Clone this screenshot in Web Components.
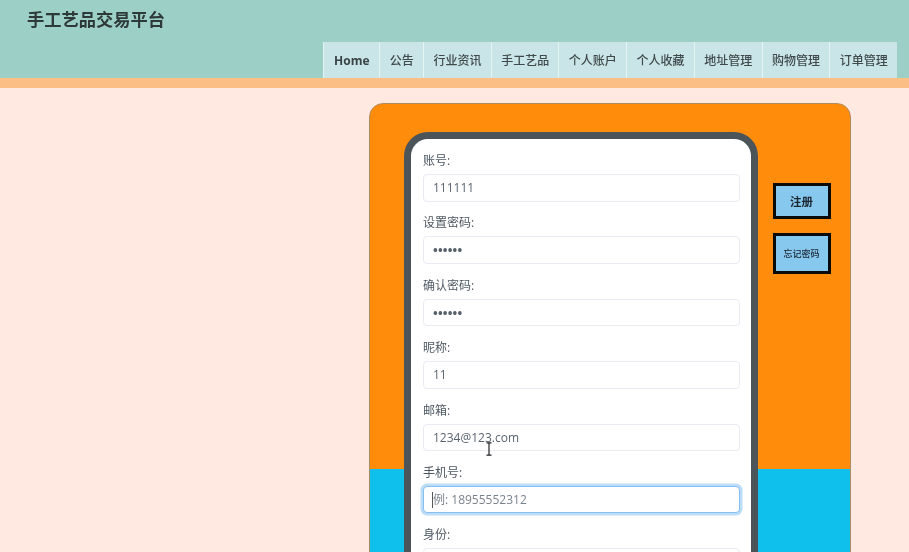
<!DOCTYPE html>
<html lang="zh"><head><meta charset="utf-8"><title>手工艺品交易平台</title>
<style>
html,body{margin:0;height:552px;overflow:hidden;background:#FFE9E0;font-family:"Open Sans","Noto Sans CJK SC",sans-serif;}
</style></head><body>
<app-page>
<site-header slot="header" brand="手工艺品交易平台">
<nav-item bold>Home</nav-item><nav-item>公告</nav-item><nav-item>行业资讯</nav-item><nav-item>手工艺品</nav-item><nav-item>个人账户</nav-item><nav-item>个人收藏</nav-item><nav-item>地址管理</nav-item><nav-item>购物管理</nav-item><nav-item>订单管理</nav-item>
</site-header>
<form-panel>
<form-field label="账号:" value="111111"></form-field>
<form-field label="设置密码:" value="••••••" dots></form-field>
<form-field label="确认密码:" value="••••••" dots></form-field>
<form-field label="昵称:" value="11"></form-field>
<form-field label="邮箱:" value="1234@123.com"></form-field>
<form-field label="手机号:" value="例: 18955552312" focus></form-field>
<form-field label="身份:" value=""></form-field>
<side-button slot="side">注册</side-button>
<side-button slot="side" small>忘记密码</side-button>
</form-panel>
</app-page>
<script>
function def(name, css, html, init){
  customElements.define(name, class extends HTMLElement{
    constructor(){super();const r=this.attachShadow({mode:"open"});r.innerHTML="<style>"+css+"</style>"+html;}
    connectedCallback(){if(init)init(this,this.shadowRoot);}
  });
}
def("app-page",":host{display:block;height:552px;overflow:hidden;position:relative;filter:blur(.35px)}main{display:block;padding:15px 0 0 369px}",
 '<slot name="header"></slot><main><slot></slot></main><svg style="position:absolute;left:484px;top:442px" width="10" height="14" viewBox="0 0 10 14" fill="none" stroke="#222" stroke-width="1.2"><path d="M2.5 .8h5M5 .8v12.4M2.5 13.2h5"/></svg>');
def("site-header",":host{display:block;height:78px;background:#9CCFC6;border-bottom:10px solid #FBBF85;color:#2F3B3B}.t{height:42px;padding-left:27px;font-size:17.25px;line-height:40px;font-weight:700;color:#2E3A3A}nav{display:flex;justify-content:flex-end;padding-right:12px;height:36px}",
 '<div class="t"></div><nav><slot></slot></nav>',(h,r)=>{r.querySelector(".t").textContent=h.getAttribute("brand");});
def("nav-item",":host{display:flex;align-items:center;padding:0 9.35px;background:#CAE5E7;border-left:1px solid #E6F3F3;font-size:12px;color:#404A4C;font-weight:500}:host([bold]){font-weight:700;padding:0 9.8px;color:#3A4446}","<slot></slot>");
def("form-panel",":host{display:block;width:480px;border:1px solid #B08A60;border-radius:14px 14px 0 0;background:linear-gradient(#FF8C0A 0,#FF8C0A 365px,#0FC0EC 365px);height:600px;box-sizing:content-box}.w{display:flex;align-items:flex-start;padding:28px 0 0 34px}.c{background:#fff;border:7px solid #4A5459;border-bottom:0;border-radius:24px 24px 0 0;padding:13px 11px 0 12px;box-sizing:content-box;width:316.5px}.s{margin-left:15px;padding-top:51px;display:flex;flex-direction:column;gap:14px}",
 '<div class="w"><div class="c"><slot></slot></div><div class="s"><slot name="side"></slot></div></div>');
def("form-field",":host{display:block;margin-bottom:12.9px;color:#4E5862}.l{font-size:12px;line-height:18px;margin-bottom:4px}.i{box-sizing:border-box;height:27.5px;border:1px solid #E8EBF2;border-radius:4px;padding:0 9px;font-size:12px;line-height:25.5px;color:#5A6470;position:relative;background:#fff}:host([dots]) .i{letter-spacing:.2px;font-size:12.5px;font-weight:700;color:#56606A;line-height:28px}:host([focus]) .i{border-color:#86BDF2;box-shadow:0 0 0 2.5px #BCDDF8;color:#7A848F}:host([focus]) .i::before{content:'';position:absolute;left:8px;top:5px;height:16px;width:1px;background:#555}",
 '<div class="l"></div><div class="i"></div>',(h,r)=>{r.querySelector(".l").textContent=h.getAttribute("label");r.querySelector(".i").textContent=h.getAttribute("value");});
def("side-button",":host{display:flex;align-items:center;justify-content:center;box-sizing:border-box;width:58px;height:36px;background:#87C8EE;border:3px solid #0A0A0A;font-size:11.5px;font-weight:700;color:#1A2530}:host([small]){height:41px;font-size:9px;font-weight:500}","<slot></slot>");
</script>
</body></html>
